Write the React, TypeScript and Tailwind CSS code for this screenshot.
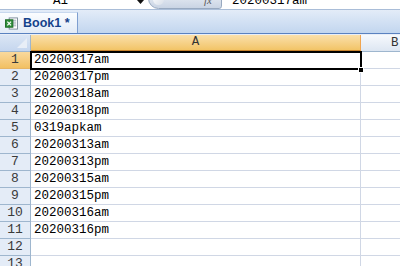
import React from "react";

const cellFont = { fontFamily: '"Liberation Mono", "Noto Sans CJK SC", monospace' } as const;

const data = [
  "20200317am",
  "20200317pm",
  "20200318am",
  "20200318pm",
  "0319apkam",
  "20200313am",
  "20200313pm",
  "20200315am",
  "20200315pm",
  "20200316am",
  "20200316pm",
  "",
  "",
];

function ExcelIcon() {
  return (
    <svg width="13" height="13" viewBox="0 0 14 13">
      <rect x="4.5" y="0.5" width="9" height="12" fill="#ffffff" stroke="#7a8a9a" />
      <line x1="8" y1="3" x2="12" y2="3" stroke="#9aa8b8" />
      <line x1="8" y1="5" x2="12" y2="5" stroke="#9aa8b8" />
      <line x1="8" y1="7" x2="12" y2="7" stroke="#9aa8b8" />
      <line x1="8" y1="9" x2="12" y2="9" stroke="#9aa8b8" />
      <rect x="0.5" y="2.5" width="8" height="8" fill="#2f8f3a" stroke="#1d6b27" />
      <path d="M2.5 4.5 L6.5 8.5 M6.5 4.5 L2.5 8.5" stroke="#ffffff" strokeWidth="1.4" />
    </svg>
  );
}

export default function App() {
  return (
    <div className="relative w-[400px] h-[266px] overflow-hidden bg-white" style={cellFont}>
      {/* formula bar */}
      <div className="flex h-[10px] border-b border-[#a9bdd8] bg-white overflow-hidden">
        <div className="relative w-[148px] h-full">
          <span className="absolute left-[53px] top-[-6px] text-[12.5px] leading-[14px] text-black">A1</span>
          <svg className="absolute left-[137px] top-[0px]" width="7" height="5" viewBox="0 0 7 5">
            <path d="M0 0 L7 0 L3.5 4 Z" fill="#111" />
          </svg>
        </div>
        <div className="relative w-[74px] h-full">
          <div className="absolute left-0 top-[-12px] w-[74px] h-[21px] rounded-l-[11px] rounded-r-[3px] border border-[#98a9c0] bg-gradient-to-b from-[#f4f6fa] to-[#c9d4e4]" />
          <div className="absolute left-[5px] top-[-6px] w-[11px] h-[11px] rounded-full bg-gradient-to-br from-white to-[#d8dfe9]" />
          <span
            className="absolute left-[56px] top-[-6px] text-[11px] leading-[13px] italic text-[#5a5a5a]"
            style={{ fontFamily: '"Liberation Serif", serif' }}
          >
            fx
          </span>
        </div>
        <div className="relative flex-1 h-full">
          <span className="absolute left-[10px] top-[-6px] text-[12.5px] leading-[14px] text-black">20200317am</span>
        </div>
      </div>

      {/* tab bar */}
      <div className="h-[23px] bg-gradient-to-b from-[#e3ecf8] to-[#c2d6ef] flex items-end">
        <div className="h-[21px] w-[78px] flex items-center gap-[5px] pl-[5px] bg-gradient-to-b from-[#fbfdff] to-[#e2ebf7] border-r border-[#7f9fd0] border-t border-t-[#c8d8ee]">
          <ExcelIcon />
          <span
            className="text-[12.5px] font-bold text-[#15428b] leading-none"
            style={{ fontFamily: '"Liberation Sans", Arial, sans-serif' }}
          >
            Book1 *
          </span>
        </div>
      </div>
      <div className="h-[1px] bg-[#5a82c0]" />
      <div className="h-[1px] bg-[#e8eef8]" />

      {/* column header row */}
      <div className="flex h-[17px]">
        <div className="relative w-[31px] h-full bg-gradient-to-b from-[#dbe6f5] to-[#c5d6ee] border-r border-b border-[#9eb6ce]">
          <svg className="absolute right-[3px] bottom-[3px]" width="10" height="10" viewBox="0 0 10 10">
            <path d="M10 0 L10 10 L0 10 Z" fill="#e8eef7" />
          </svg>
        </div>
        <div className="w-[330px] h-full flex items-center justify-center bg-gradient-to-b from-[#fae0aa] to-[#f2c466] border-r border-[#f0a550] border-b-2 border-b-[#c8832d] text-[12.5px] text-[#333]">
          A
        </div>
        <div className="flex-1 h-full pl-[30px] flex items-center bg-gradient-to-b from-[#f6f9fd] to-[#dde6f2] border-b border-[#9eb6ce] text-[12.5px] text-[#333]">
          B
        </div>
      </div>

      {/* rows */}
      {data.map((v, i) => {
        const sel = i === 0;
        return (
          <div key={i} className="flex h-[17px]">
            <div
              className={
                sel
                  ? "w-[31px] h-full flex items-center justify-center bg-gradient-to-b from-[#f9d99c] to-[#f2c062] border-r border-r-[#f0a550] border-b border-b-[#e6b566] text-[13px] text-[#3a3a3a]"
                  : "w-[31px] h-full flex items-center justify-center bg-[#e4ecf7] border-r border-b border-[#9eb6ce] text-[13px] text-[#3a3a3a]"
              }
            >
              {i + 1}
            </div>
            <div className="w-[330px] h-full pl-[3px] flex items-center border-r border-b border-[#d0d7e5] text-[12.5px] text-black">
              {v}
            </div>
            <div className="flex-1 h-full border-b border-[#d0d7e5]" />
          </div>
        );
      })}

      {/* selection box over A1 */}
      <div className="absolute left-[30px] top-[51px] w-[332px] h-[19px] border-2 border-black pointer-events-none" />
      <div className="absolute left-[358px] top-[67px] w-[6px] h-[6px] bg-black border border-white" />
    </div>
  );
}
